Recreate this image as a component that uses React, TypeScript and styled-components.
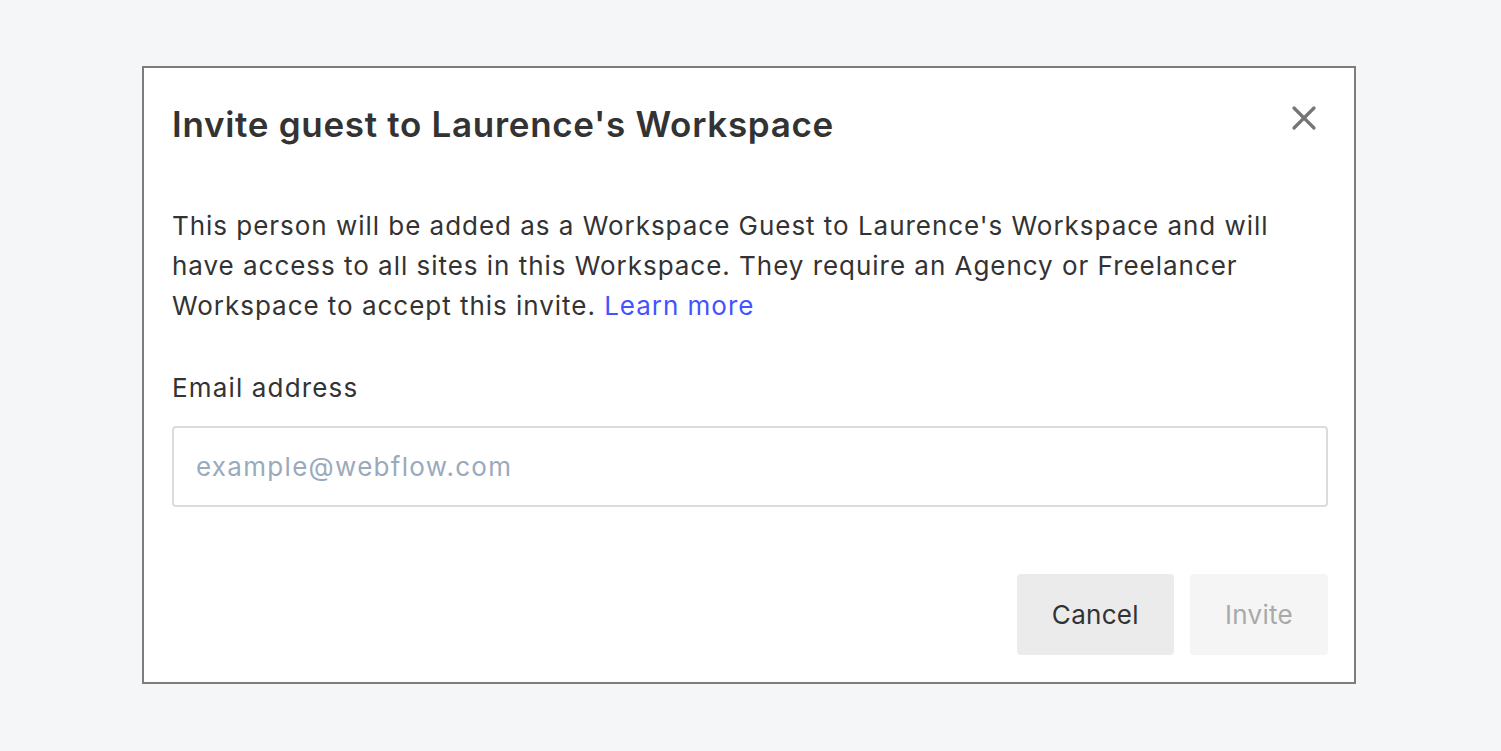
import React from "react";
import styled, { createGlobalStyle } from "styled-components";

const Global = createGlobalStyle`
  html, body { margin: 0; padding: 0; background: #f5f6f8; }
  body { font-family: Inter, "Noto Sans", "Liberation Sans", sans-serif; }
  * { box-sizing: border-box; }
`;

const Page = styled.div`
  width: 1501px;
  height: 751px;
  display: flex;
  justify-content: flex-start;
  align-items: flex-start;
  padding: 66px 0 0 142px;
`;

const Dialog = styled.div`
  width: 1214px;
  height: 618px;
  background: #ffffff;
  border: 2px solid #7d7d7d;
  display: flex;
  flex-direction: column;
  padding: 32px 26px 27px 28px;
`;

const Header = styled.div`
  display: flex;
  justify-content: space-between;
  align-items: flex-start;
`;

const Title = styled.h1`
  margin: 0;
  font-size: 35px;
  line-height: 48px;
  font-weight: 600;
  color: #333333;
  letter-spacing: 0.7px;
`;

const CloseButton = styled.button`
  border: 0;
  background: transparent;
  padding: 0;
  margin: 2px 8px 0 0;
  width: 32px;
  height: 32px;
  display: flex;
  align-items: center;
  justify-content: center;
  cursor: pointer;
`;

const Body = styled.p`
  margin: 58px 0 0 0;
  font-size: 26px;
  line-height: 40px;
  color: #333333;
  letter-spacing: 0.97px;
`;

const Link = styled.a`
  color: #4353ff;
  text-decoration: none;
`;

const Label = styled.label`
  display: block;
  margin-top: 42px;
  font-size: 26px;
  line-height: 40px;
  color: #333333;
  letter-spacing: 1.15px;
`;

const Input = styled.input`
  margin-top: 18px;
  width: 1156px;
  height: 81px;
  border: 2px solid #dcdcdc;
  border-radius: 4px;
  padding: 0 22px;
  font-family: inherit;
  font-size: 26px;
  letter-spacing: 1.3px;
  color: #333;
  outline: none;
  &::placeholder { color: #9aaabd; }
`;

const Footer = styled.div`
  margin-top: auto;
  display: flex;
  justify-content: flex-end;
  gap: 16px;
`;

const Button = styled.button<{ $disabled?: boolean }>`
  height: 81px;
  padding: 0 35px;
  border: 0;
  border-radius: 4px;
  font-family: inherit;
  font-size: 26px;
  letter-spacing: 0.3px;
  background: ${(p) => (p.$disabled ? "#f5f5f5" : "#ebebeb")};
  color: ${(p) => (p.$disabled ? "#a9a9a9" : "#333333")};
  cursor: ${(p) => (p.$disabled ? "default" : "pointer")};
`;

export default function App() {
  return (
    <>
      <Global />
      <Page>
        <Dialog>
          <Header>
            <Title>Invite guest to Laurence's Workspace</Title>
            <CloseButton aria-label="Close">
              <svg width="26" height="26" viewBox="0 0 26 26">
                <path d="M3 3 L23 23 M23 3 L3 23" stroke="#757575" strokeWidth="3.2" strokeLinecap="round" />
              </svg>
            </CloseButton>
          </Header>
          <Body>
            This person will be added as a Workspace Guest to Laurence's Workspace and will have access to all sites in this Workspace. They require an Agency or Freelancer Workspace to accept this invite.{" "}
            <Link href="#">Learn more</Link>
          </Body>
          <Label htmlFor="email">Email address</Label>
          <Input id="email" placeholder="example@webflow.com" />
          <Footer>
            <Button>Cancel</Button>
            <Button $disabled disabled>Invite</Button>
          </Footer>
        </Dialog>
      </Page>
    </>
  );
}
